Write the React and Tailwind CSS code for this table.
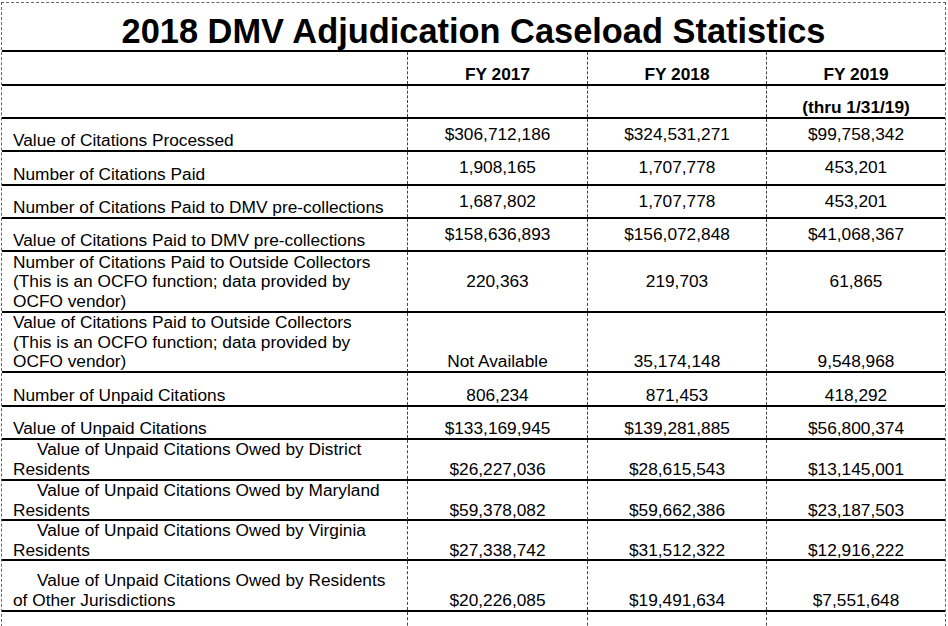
const rows = [
  { label: [['Value of Citations Processed']], h: 'h-[33px]', v: ['$306,712,186', '$324,531,271', '$99,758,342'], a: 'items-center' },
  { label: [['Number of Citations Paid']], h: 'h-[34px]', v: ['1,908,165', '1,707,778', '453,201'], a: 'items-center' },
  { label: [['Number of Citations Paid to DMV pre-collections']], h: 'h-[33px]', v: ['1,687,802', '1,707,778', '453,201'], a: 'items-center' },
  { label: [['Value of Citations Paid to DMV pre-collections']], h: 'h-[33px]', v: ['$158,636,893', '$156,072,848', '$41,068,367'], a: 'items-center' },
  { label: [['Number of Citations Paid to Outside Collectors'], ['(This is an OCFO function; data provided by'], ['OCFO vendor)']], h: 'h-[61px]', v: ['220,363', '219,703', '61,865'], a: 'items-center' },
  { label: [['Value of Citations Paid to Outside Collectors'], ['(This is an OCFO function; data provided by'], ['OCFO vendor)']], h: 'h-[60px]', v: ['Not Available', '35,174,148', '9,548,968'], a: 'items-end' },
  { label: [['Number of Unpaid Citations']], h: 'h-[34px]', v: ['806,234', '871,453', '418,292'], a: 'items-end' },
  { label: [['Value of Unpaid Citations']], h: 'h-[33px]', v: ['$133,169,945', '$139,281,885', '$56,800,374'], a: 'items-end' },
  { label: [['Value of Unpaid Citations Owed by District', true], ['Residents']], h: 'h-[41px]', v: ['$26,227,036', '$28,615,543', '$13,145,001'], a: 'items-end' },
  { label: [['Value of Unpaid Citations Owed by Maryland', true], ['Residents']], h: 'h-[40px]', v: ['$59,378,082', '$59,662,386', '$23,187,503'], a: 'items-end' },
  { label: [['Value of Unpaid Citations Owed by Virginia', true], ['Residents']], h: 'h-[40px]', v: ['$27,338,742', '$31,512,322', '$12,916,222'], a: 'items-end' },
  { label: [['Value of Unpaid Citations Owed by Residents', true], ['of Other Jurisdictions']], h: 'h-[51px]', v: ['$20,226,085', '$19,491,634', '$7,551,648'], a: 'items-end' },
];

const cols = 'grid grid-cols-[405px_180px_179px_179px]';
const dash = 'border-l border-dashed border-[#444]';

export default function App() {
  return (
    <div className="w-[948px] h-[626px] overflow-hidden bg-white pt-[2px] pl-[1px] font-['Liberation_Sans',Arial,sans-serif] text-[17.3px] leading-[19.5px] text-black">
      <div className="w-[945px] border-t border-l border-r border-dashed border-[#666]">
        <div className="h-[49px] border-b-2 border-black flex justify-center pt-[9px] overflow-hidden">
          <h1 className="text-[34.4px] leading-[39px] font-bold">2018 DMV Adjudication Caseload Statistics</h1>
        </div>
        <div className={`${cols} h-[34px] border-b-2 border-black font-bold`}>
          <div />
          <div className={`${dash} flex items-end justify-center`}>FY 2017</div>
          <div className={`${dash} flex items-end justify-center`}>FY 2018</div>
          <div className={`${dash} flex items-end justify-center`}>FY 2019</div>
        </div>
        <div className={`${cols} h-[33px] border-b-2 border-black font-bold`}>
          <div />
          <div className={dash} />
          <div className={dash} />
          <div className={`${dash} flex items-end justify-center`}>(thru 1/31/19)</div>
        </div>
        {rows.map((r, i) => (
          <div key={i} className={`${cols} ${r.h} border-b-2 border-black`}>
            <div className="flex flex-col justify-end pl-[11px]">
              {r.label.map(([t, ind], j) => (
                <div key={j} className={ind ? 'pl-[24px] whitespace-nowrap' : 'whitespace-nowrap'}>{t}</div>
              ))}
            </div>
            {r.v.map((val, k) => (
              <div key={k} className={`${dash} flex ${r.a} justify-center`}>{val}</div>
            ))}
          </div>
        ))}
        <div className={`${cols} h-[40px]`}>
          <div />
          <div className={dash} />
          <div className={dash} />
          <div className={dash} />
        </div>
      </div>
    </div>
  );
}
